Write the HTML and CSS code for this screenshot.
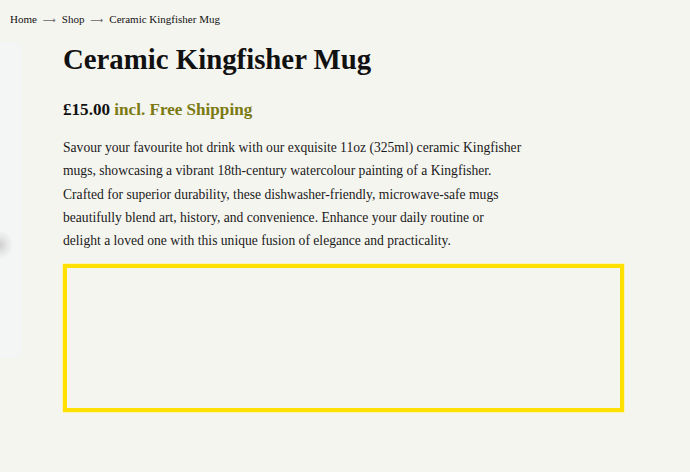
FILE: index.html
```html
<!DOCTYPE html>
<html lang="en">
<head>
<meta charset="utf-8">
<title>Ceramic Kingfisher Mug</title>
<link rel="stylesheet" href="styles.css">
</head>
<body>
<div class="side-image"><span class="side-blob"></span></div>
<nav class="breadcrumb">
  <a href="#">Home</a><span class="sep">⟶</span><a href="#">Shop</a><span class="sep">⟶</span><span class="current">Ceramic Kingfisher Mug</span>
</nav>
<main class="product">
  <h1 class="title">Ceramic Kingfisher Mug</h1>
  <p class="price"><span class="amount">£15.00</span> <span class="shipping">incl. Free Shipping</span></p>
  <p class="desc">Savour your favourite hot drink with our exquisite 11oz (325ml) ceramic Kingfisher mugs, showcasing a vibrant 18th-century watercolour painting of a Kingfisher. Crafted for superior durability, these dishwasher-friendly, microwave-safe mugs beautifully blend art, history, and convenience. Enhance your daily routine or delight a loved one with this unique fusion of elegance and practicality.</p>
  <div class="embed-box"></div>
</main>
</body>
</html>
```
FILE: styles.css
```css
html, body {
  margin: 0;
  padding: 0;
}
body {
  background: #f5f5f0;
  font-family: "Liberation Serif", "Times New Roman", serif;
  color: #111;
  min-height: 472px;
  position: relative;
}
.side-image {
  position: absolute;
  left: 0;
  top: 42px;
  width: 22px;
  height: 316px;
  background: #f4f5f5;
  overflow: hidden;
}
.side-blob {
  position: absolute;
  left: -14px;
  top: 188px;
  width: 26px;
  height: 30px;
  border-radius: 50%;
  background: radial-gradient(circle, rgba(200,200,200,0.9) 0%, rgba(220,220,220,0.5) 45%, rgba(244,245,245,0) 75%);
}
.breadcrumb {
  padding: 10px 0 0 10px;
  font-size: 11px;
  line-height: 14px;
  display: flex;
  align-items: center;
}
.breadcrumb a, .breadcrumb .current {
  color: #111;
  text-decoration: none;
}
.breadcrumb .sep {
  color: #666;
  margin: 3px 6px 0 6px;
  font-family: "DejaVu Sans", sans-serif;
  font-size: 9px;
}
.product {
  padding: 0 0 0 63px;
}
.title {
  margin: 15px 0 0;
  font-size: 28.8px;
  line-height: 35px;
  font-weight: bold;
  color: #111;
}
.price {
  margin: 22px 0 0;
  font-size: 17.1px;
  line-height: 21px;
  font-weight: bold;
}
.price .amount {
  color: #111;
}
.price .shipping {
  color: #7b7a12;
}
.desc {
  margin: 16px 0 0;
  font-size: 13.6px;
  line-height: 23.33px;
  color: #1a1a1a;
  max-width: 459px;
}
.embed-box {
  margin-top: 11px;
  width: 553px;
  height: 140px;
  border: 4px solid #ffe000;
  outline: 1px solid #fbf3b8;
}
```
